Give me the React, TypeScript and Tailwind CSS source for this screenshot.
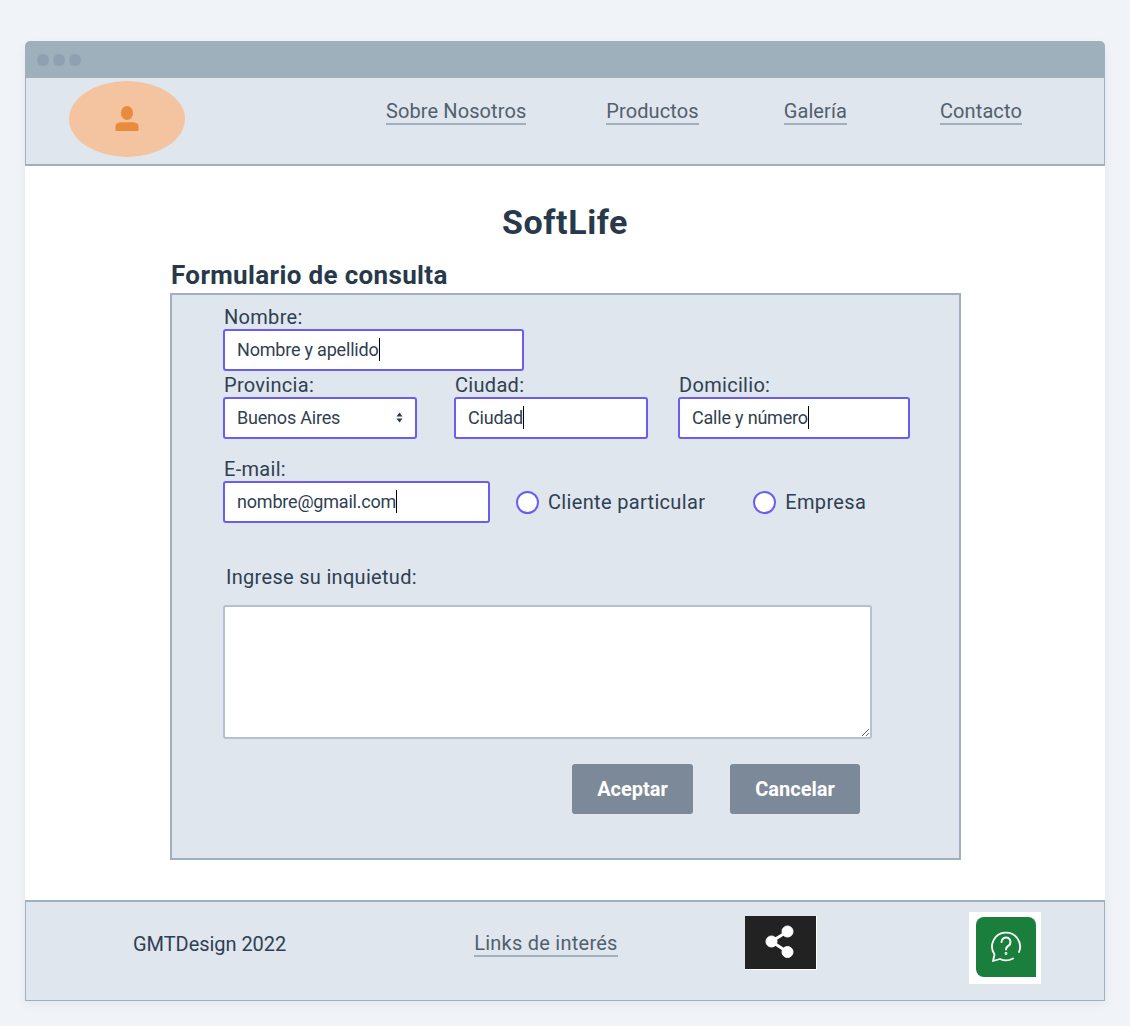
const labelClass = "block pb-[2px] text-[20px] leading-[20px] tracking-[0.3px] text-[#2f4052]";
const fieldClass =
  "flex h-[42px] items-center rounded-[3px] border-2 border-[#6a5cf5] bg-white pb-[2px] pl-3 text-[18px] tracking-[-0.2px] text-[#2f4052]";

const Caret = () => <span className="inline-block h-[23px] w-px bg-black" />;

const Field = ({ text, className }: { text: string; className: string }) => (
  <div className={`${fieldClass} ${className}`}>
    <span>{text}</span>
    <Caret />
  </div>
);

const Radio = ({ label, className }: { label: string; className: string }) => (
  <label className={`flex items-center text-[20px] tracking-[0.33px] text-[#2f4052] ${className}`}>
    <span className="mr-[9px] h-[23px] w-[23px] rounded-full border-2 border-[#6a5cf5] bg-white" />
    {label}
  </label>
);

const NavLink = ({ text, className }: { text: string; className: string }) => (
  <a className={`border-b-2 border-[#9fafbe] text-[20px] leading-[24px] tracking-[0.1px] text-[#52606d] ${className}`}>
    {text}
  </a>
);

const App = () => {
  return (
    <div className="min-h-[1026px] bg-[#f0f4f8] px-[25px] pt-[41px] font-['Roboto',sans-serif]">
      <div className="h-[960px] w-[1080px] overflow-hidden rounded-t-[5px] bg-white shadow-[0_4px_12px_rgba(0,0,0,0.05)]">
        {/* Barra de ventana */}
        <div className="flex h-[37px] items-center gap-1 bg-[#9fb0bd] pl-3">
          <span className="h-3 w-3 rounded-full bg-[#8fa1b0]" />
          <span className="h-3 w-3 rounded-full bg-[#8fa1b0]" />
          <span className="h-3 w-3 rounded-full bg-[#8fa1b0]" />
        </div>

        {/* Header */}
        <header className="flex h-[88px] items-start border-x border-b-2 border-[#9fafbe] bg-[#dfe6ee] pl-[43px]">
          <div className="mt-[3px] flex h-[76px] w-[116px] items-center justify-center rounded-[50%] bg-[#f4c3a0]">
            <svg width="24" height="26" viewBox="0 0 24 26" className="text-[#ea8a3c]" fill="currentColor">
              <ellipse cx="12" cy="7" rx="6" ry="7" />
              <path d="M0.500 25v-4.500C0.500 17.500 3.500 16.300 7 16.300h10c3.500 0 6.500 1.200 6.500 4.200V25z" />
            </svg>
          </div>
          <nav className="mt-[21px] flex">
            <NavLink text="Sobre Nosotros" className="ml-[201px]" />
            <NavLink text="Productos" className="ml-[80px]" />
            <NavLink text="Galería" className="ml-[85px]" />
            <NavLink text="Contacto" className="ml-[93px]" />
          </nav>
        </header>

        {/* Main */}
        <main className="h-[734px] pl-[145px] pt-[35px]">
          <h1 className="w-[790px] text-center text-[34px] leading-[42px] font-bold tracking-[0.6px] text-[#27394a]">
            SoftLife
          </h1>
          <h2 className="mt-[17px] pl-px text-[26px] leading-[30px] font-bold tracking-[0.35px] text-[#27394a]">
            Formulario de consulta
          </h2>

          <form className="mt-[3px] h-[567px] w-[791px] border-2 border-[#9fafbe] bg-[#dfe6ee] pl-[51px] pt-[12px]">
            <label className={`${labelClass} pl-px`}>Nombre:</label>
            <Field text="Nombre y apellido" className="w-[301px]" />

            <div className="mt-[4px] flex">
              <div>
                <label className={`${labelClass} pl-px`}>Provincia:</label>
                <div className={`${fieldClass} w-[194px] justify-between pr-3`}>
                  <span>Buenos Aires</span>
                  <svg width="7" height="11" viewBox="0 0 7 11" fill="#243b53">
                    <path d="M3.500 0.500 6.500 4.500H0.500zM3.500 10.500 0.500 6.500h6z" />
                  </svg>
                </div>
              </div>
              <div className="ml-[37px]">
                <label className={`${labelClass} pl-px`}>Ciudad:</label>
                <Field text="Ciudad" className="w-[194px]" />
              </div>
              <div className="ml-[30px]">
                <label className={`${labelClass} pl-px`}>Domicilio:</label>
                <Field text="Calle y número" className="w-[232px]" />
              </div>
            </div>

            <label className={`${labelClass} mt-[20px] pl-px`}>E-mail:</label>
            <div className="flex items-center">
              <Field text="nombre@gmail.com" className="w-[267px]" />
              <Radio label="Cliente particular" className="ml-[26px]" />
              <Radio label="Empresa" className="ml-[48px]" />
            </div>

            <label className={`${labelClass} mt-[44px] pl-[3px]`}>Ingrese su inquietud:</label>
            <textarea
              aria-label="Ingrese su inquietud"
              className="mt-[16px] block h-[134px] w-[649px] rounded-[3px] border-2 border-[#b3c1d1] bg-white"
            />

            <div className="mt-[25px] flex">
              <button type="button" className="ml-[349px] h-[50px] w-[121px] rounded-[3px] bg-[#7b8998] text-[20px] font-bold text-white">
                Aceptar
              </button>
              <button type="button" className="ml-[37px] h-[50px] w-[130px] rounded-[3px] bg-[#7b8998] text-[20px] font-bold text-white">
                Cancelar
              </button>
            </div>
          </form>
        </main>

        {/* Footer */}
        <footer className="relative flex h-[101px] items-start border-x border-b border-t-2 border-[#9fafbe] bg-[#dfe6ee]">
          <span className="ml-[107px] mt-[30px] text-[20px] leading-[24px] tracking-[-0.05px] text-[#2f4052]">GMTDesign 2022</span>
          <a className="ml-[188px] mt-[30px] border-b-2 border-[#9fafbe] text-[20px] leading-[23px] tracking-[0.25px] text-[#52606d]">
            Links de interés
          </a>
          <div className="absolute left-[719px] top-[14px] flex h-[54px] w-[72px] items-center justify-center border-b border-r border-white bg-[#222222]">
            <svg width="32" height="36" viewBox="0 0 32 36" fill="white" stroke="white">
              <circle cx="22.500" cy="6.500" r="5.500" />
              <circle cx="6.500" cy="16.500" r="5.500" />
              <circle cx="22.500" cy="27" r="5.500" />
              <path d="M6.500 16.500 22.500 6.500M6.500 16.500 22.500 27" strokeWidth="3" />
            </svg>
          </div>
          <div className="absolute left-[943px] top-[10px] flex h-[72px] w-[72px] bg-white pl-[7px] pt-[5px]">
            <div className="flex h-[60px] w-[60px] items-center justify-center rounded-t-[8px] rounded-bl-[8px] bg-[#1a7f3c]">
              <svg width="32" height="32" viewBox="0 0 32 32" fill="none" stroke="white" strokeWidth="1.800" strokeLinecap="round" strokeLinejoin="round">
                <path d="M29 21A14 14 0 1 0 4.500 23.500L3 30l7-2A14 14 0 0 0 23 27.500" />
                <path d="M11.500 11a4.500 4.500 0 1 1 7 3.700c-1.500 1-2.500 1.800-2.500 3.800" strokeWidth="2" />
                <circle cx="16" cy="22.500" r="0.500" />
              </svg>
            </div>
          </div>
        </footer>
      </div>
    </div>
  );
};

export default App;
